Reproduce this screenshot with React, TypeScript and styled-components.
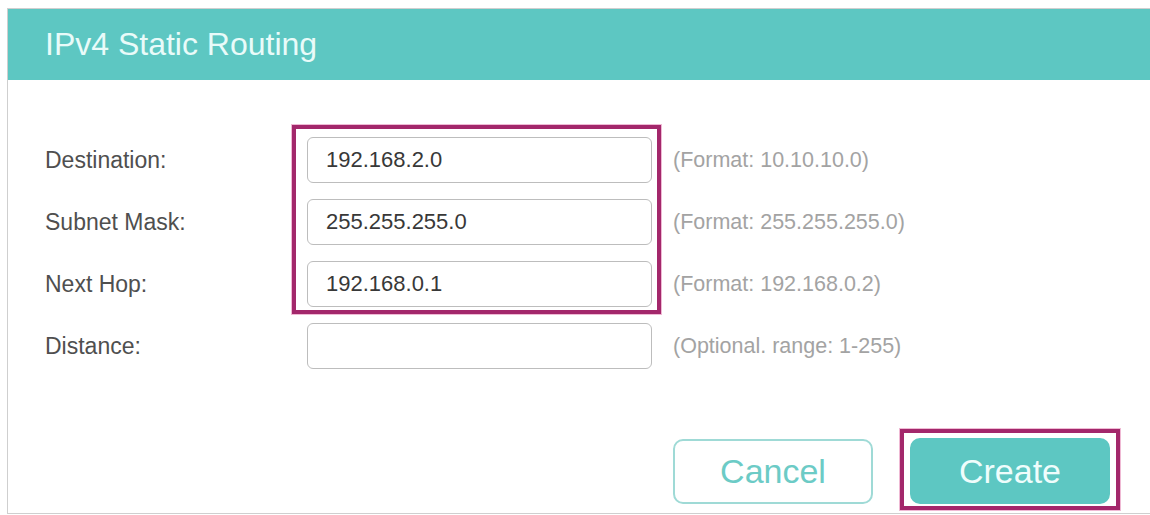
import React from "react";
import styled, { createGlobalStyle } from "styled-components";

const GlobalStyle = createGlobalStyle`
  html, body {
    margin: 0;
    padding: 0;
    background: #ffffff;
    font-family: "Liberation Sans", Arial, sans-serif;
  }
  * { box-sizing: border-box; }
`;

const Page = styled.div`
  width: 1150px;
  height: 515px;
  overflow: hidden;
  padding: 8px 0 0 7px;
`;

const Panel = styled.section`
  height: 506px;
  border: 1px solid #cfcfcf;
  border-right: none;
  display: flex;
  flex-direction: column;
`;

const Header = styled.header`
  height: 71px;
  flex: none;
  background: #5dc7c2;
  display: flex;
  align-items: center;
  padding-left: 37px;
`;

const Title = styled.h1`
  margin: 0;
  font-size: 32px;
  font-weight: 400;
  color: #e9fbf9;
`;

const Form = styled.div`
  display: grid;
  grid-template-columns: 241px 345px auto;
  grid-auto-rows: 46px;
  row-gap: 16px;
  column-gap: 21px;
  padding: 57px 0 0 37px;
  align-items: center;
`;

const Label = styled.label<{ $row: number }>`
  grid-column: 1;
  grid-row: ${(p) => p.$row};
  font-size: 23px;
  color: #4f4f4f;
`;

const Field = styled.div<{ $row: number }>`
  grid-column: 2;
  grid-row: ${(p) => p.$row};
  height: 46px;
  border: 1.5px solid #bdbdbd;
  border-radius: 6px;
  background: #fff;
  display: flex;
  align-items: center;
  padding-left: 18px;
  font-size: 22px;
  color: #383838;
`;

const Hint = styled.span<{ $row: number }>`
  grid-column: 3;
  grid-row: ${(p) => p.$row};
  font-size: 21.5px;
  color: #a3a3a3;
`;

const Highlight = styled.div`
  grid-column: 2;
  grid-row: 1 / 4;
  align-self: stretch;
  margin: -12px -9px -7px -15px;
  border: 4px solid #a3276b;
  box-shadow: 0 0 0 1px rgba(226, 128, 176, 0.55);
  pointer-events: none;
`;

const Footer = styled.div`
  display: flex;
  justify-content: flex-end;
  align-items: flex-end;
  gap: 27px;
  margin-top: 60px;
  padding-right: 30px;
`;

const Button = styled.button<{ $primary?: boolean }>`
  width: 200px;
  height: 66px;
  border-radius: 10px;
  font-family: "Liberation Sans", Arial, sans-serif;
  font-size: 34px;
  cursor: pointer;
  border: 2px solid ${(p) => (p.$primary ? "#5dc7c2" : "#9fdad6")};
  background: ${(p) => (p.$primary ? "#5dc7c2" : "#ffffff")};
  color: ${(p) => (p.$primary ? "#effdfc" : "#6ccbc6")};
`;

const CancelButton = styled(Button)`
  height: 65px;
  margin-bottom: 6px;
`;

const ButtonMark = styled.span`
  display: inline-flex;
  border: 4px solid #a3276b;
  box-shadow: 0 0 0 1px rgba(226, 128, 176, 0.55);
  padding: 5px 6px 2px 6px;
`;

const rows = [
  { label: "Destination:", value: "192.168.2.0", hint: "(Format: 10.10.10.0)" },
  { label: "Subnet Mask:", value: "255.255.255.0", hint: "(Format: 255.255.255.0)" },
  { label: "Next Hop:", value: "192.168.0.1", hint: "(Format: 192.168.0.2)" },
  { label: "Distance:", value: "", hint: "(Optional. range: 1-255)" },
];

export default function App() {
  return (
    <>
      <GlobalStyle />
      <Page>
        <Panel>
          <Header>
            <Title>IPv4 Static Routing</Title>
          </Header>
          <Form>
            {rows.map((r, i) => (
              <React.Fragment key={r.label}>
                <Label $row={i + 1}>{r.label}</Label>
                <Field $row={i + 1}>{r.value}</Field>
                <Hint $row={i + 1}>{r.hint}</Hint>
              </React.Fragment>
            ))}
            <Highlight />
          </Form>
          <Footer>
            <CancelButton>Cancel</CancelButton>
            <ButtonMark>
              <Button $primary>Create</Button>
            </ButtonMark>
          </Footer>
        </Panel>
      </Page>
    </>
  );
}
